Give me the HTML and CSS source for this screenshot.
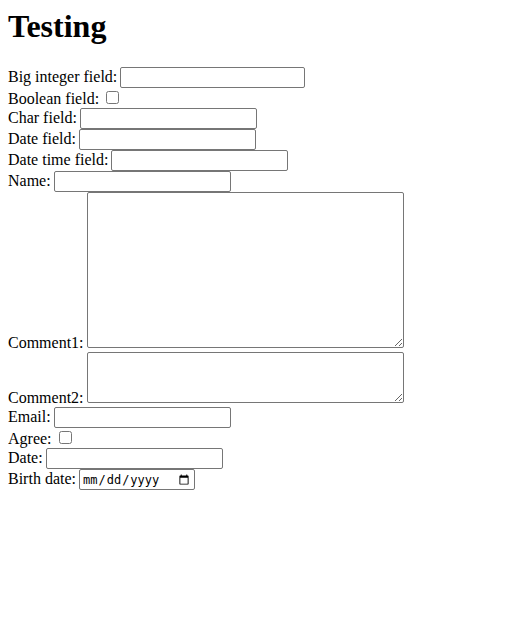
FILE: index.html
```html
<!DOCTYPE html>
<html>
<head>
<meta charset="utf-8">
<title>Testing</title>
<link rel="stylesheet" href="styles.css">
</head>
<body>
<h1 class="title">Testing</h1>
<form class="form">
<div class="row"><label class="lbl" for="f1">Big integer field:</label> <input class="field num" type="number" id="f1"></div>
<div class="row"><label class="lbl" for="f2">Boolean field:</label> <input class="check" type="checkbox" id="f2"></div>
<div class="row"><label class="lbl" for="f3">Char field:</label> <input class="field" type="text" id="f3"></div>
<div class="row"><label class="lbl" for="f4">Date field:</label> <input class="field" type="text" id="f4"></div>
<div class="row"><label class="lbl" for="f5">Date time field:</label> <input class="field" type="text" id="f5"></div>
<div class="row"><label class="lbl" for="f6">Name:</label> <input class="field" type="text" id="f6"></div>
<div class="row"><label class="lbl" for="f7">Comment1:</label> <textarea class="area big" id="f7"></textarea></div>
<div class="row"><label class="lbl" for="f8">Comment2:</label> <textarea class="area small" id="f8"></textarea></div>
<div class="row"><label class="lbl" for="f9">Email:</label> <input class="field" type="email" id="f9"></div>
<div class="row"><label class="lbl" for="f10">Agree:</label> <input class="check" type="checkbox" id="f10"></div>
<div class="row"><label class="lbl" for="f11">Date:</label> <input class="field" type="text" id="f11"></div>
<div class="row"><label class="lbl" for="f12">Birth date:</label> <input class="field date" type="date" id="f12"></div>
</form>
</body>
</html>
```
FILE: styles.css
```css
body {
  margin: 8px;
  font-family: "Liberation Serif", "Times New Roman", serif;
  font-size: 16px;
  color: #000;
  background: #fff;
}
.title {
  font-size: 32px;
  font-weight: bold;
  margin: 0 0 22px 0;
}
.form {
  margin: 0;
}
.lbl {
  margin-right: -1px;
}
.field {
  font-family: "Liberation Sans", Arial, sans-serif;
  font-size: 13.333px;
  width: 177px;
  height: 21px;
  box-sizing: border-box;
  border: 1px solid #767676;
  border-radius: 2px;
  padding: 1px 2px;
  margin: 0;
}
.num {
  width: 185px;
}
.date {
  width: 116px;
  font-family: "DejaVu Sans Mono", "Liberation Mono", monospace;
  font-size: 12px;
}
.check {
  width: 13px;
  height: 13px;
  margin: 3px 3px 3px 4px;
}
.area {
  font-family: "Liberation Mono", monospace;
  font-size: 13.333px;
  width: 317px;
  box-sizing: border-box;
  border: 1px solid #767676;
  border-radius: 2px;
  padding: 2px;
  margin: 0;
}
.area.big {
  height: 156px;
}
.area.small {
  height: 51px;
}
```
